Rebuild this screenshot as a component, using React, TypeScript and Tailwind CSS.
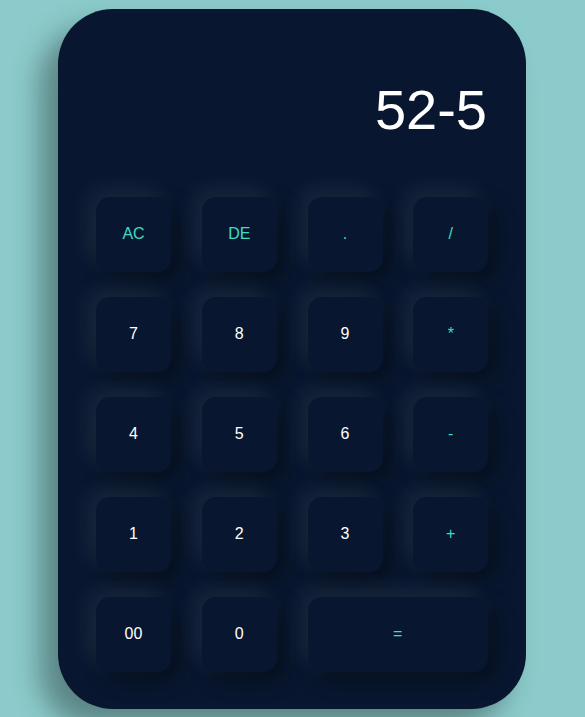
const keys: { label: string; op?: boolean; wide?: boolean }[] = [
  { label: "AC", op: true },
  { label: "DE", op: true },
  { label: ".", op: true },
  { label: "/", op: true },
  { label: "7" },
  { label: "8" },
  { label: "9" },
  { label: "*", op: true },
  { label: "4" },
  { label: "5" },
  { label: "6" },
  { label: "-", op: true },
  { label: "1" },
  { label: "2" },
  { label: "3" },
  { label: "+", op: true },
  { label: "00" },
  { label: "0" },
  { label: "=", op: true, wide: true },
];

export default function App() {
  return (
    <div
      className="min-h-[717px] w-full bg-[#8ccbcb] flex justify-center pt-[9px]"
      style={{ fontFamily: '"Liberation Sans", Arial, sans-serif' }}
    >
      <div className="w-[468px] h-[700px] ml-[-1px] rounded-[55px] bg-[#08172f] px-[38px] pt-[73px] shadow-[-18px_18px_28px_rgba(0,0,0,0.35)]">
        <div className="h-[57px] pr-[1px] text-right text-[56px] leading-none text-white">52-5</div>
        <div className="mt-[58px] grid grid-cols-4 gap-x-[31px] gap-y-[25px]">
          {keys.map((k) => (
            <button
              key={k.label}
              className={`h-[75px] pb-[2px] rounded-[14px] bg-[#08172f] text-[16px] shadow-[-8px_-8px_22px_rgba(255,255,255,0.08),8px_8px_20px_rgba(0,0,0,0.4)] ${
                k.wide ? "col-span-2" : "w-[75px]"
              } ${k.op ? "text-[#3fdcc4]" : "text-white"}`}
            >
              {k.label}
            </button>
          ))}
        </div>
      </div>
    </div>
  );
}
